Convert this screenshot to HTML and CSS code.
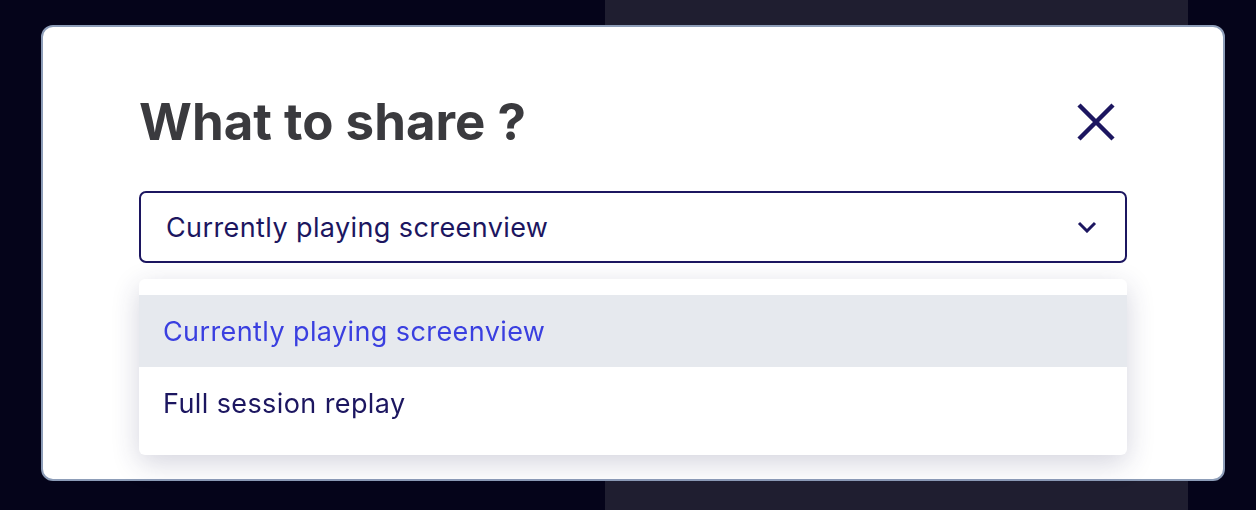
FILE: index.html
```
<!DOCTYPE html>
<html lang="en">
<head>
    <meta charset="UTF-8">
    <meta name="viewport" content="width=device-width, initial-scale=1.0">
    <title>Share</title>
    <link rel="stylesheet" href="styles.css">
</head>
<body>
    <div class="backdrop">
        <div class="side"></div>
        <div class="panel"></div>
        <div class="side"></div>
    </div>
    <div class="modal">
        <div class="modal-head">
            <h1 class="title">What to share ?</h1>
            <button class="close" aria-label="Close">
                <svg width="38" height="38" viewBox="0 0 38 38">
                    <path d="M2 2 L36 36 M36 2 L2 36" stroke="#1c1660" stroke-width="4.5" fill="none"/>
                </svg>
            </button>
        </div>
        <div class="select">
            <div class="select-box">
                <span class="select-value">Currently playing screenview</span>
                <svg class="chevron" width="20" height="12" viewBox="0 0 20 12">
                    <path d="M2 2 L10 10 L18 2" stroke="#1c1660" stroke-width="3" fill="none"/>
                </svg>
            </div>
            <ul class="options">
                <li class="option active">Currently playing screenview</li>
                <li class="option">Full session replay</li>
            </ul>
        </div>
    </div>
</body>
</html>
```
FILE: styles.css
```
*{
    padding: 0;
    margin: 0;
    box-sizing: border-box;
}
html, body{
    height: 100%;
}
body{
    font-family: Inter, Lato, sans-serif;
    background-color: #05041a;
    overflow: hidden;
}
.backdrop{
    display: flex;
    height: 100%;
}
.side{
    flex: 0 0 605px;
}
.side:last-child{
    flex: 1;
}
.panel{
    flex: 0 0 583px;
    background-color: #1f1e30;
}
.modal{
    position: fixed;
    top: 25px;
    left: 41px;
    width: 1184px;
    height: 456px;
    background-color: #fff;
    border: 2px solid #8d9db8;
    border-radius: 12px;
    padding: 57px 96px 0 96px;
}
.modal-head{
    display: flex;
    justify-content: space-between;
    align-items: center;
    height: 75px;
}
.title{
    font-size: 51px;
    font-weight: 700;
    color: #3a3a3e;
}
.close{
    border: none;
    background: none;
    width: 38px;
    height: 38px;
    margin-right: 12px;
    cursor: pointer;
}
.select{
    position: relative;
    margin-top: 32px;
}
.select-box{
    display: flex;
    justify-content: space-between;
    align-items: center;
    height: 72px;
    border: 2px solid #1c1660;
    border-radius: 7px;
    padding: 0 28px 0 25px;
}
.select-value{
    font-size: 27px;
    letter-spacing: 0.4px;
    color: #1c1660;
}
.options{
    position: absolute;
    top: 88px;
    left: 0;
    right: 0;
    list-style: none;
    background-color: #fff;
    border-radius: 6px;
    padding: 16px 0;
    box-shadow: 0 8px 28px rgba(40, 40, 90, 0.2);
}
.option{
    height: 72px;
    display: flex;
    align-items: center;
    padding-left: 24px;
    font-size: 27px;
    letter-spacing: 0.4px;
    color: #1c1660;
}
.option.active{
    background-color: #e6e9ee;
    color: #3a3fe0;
}
```
